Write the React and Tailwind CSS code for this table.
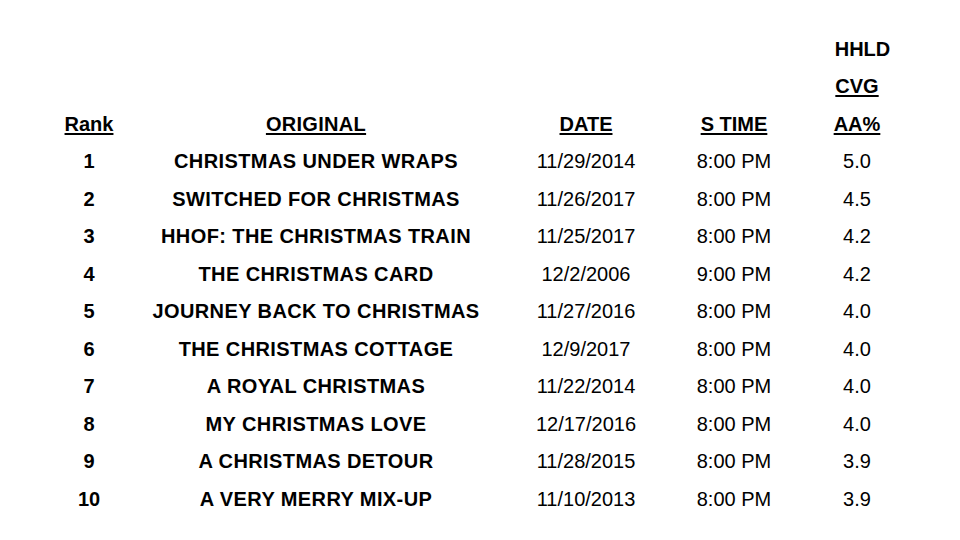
const rows = [
  ["1", "CHRISTMAS UNDER WRAPS", "11/29/2014", "8:00 PM", "5.0"],
  ["2", "SWITCHED FOR CHRISTMAS", "11/26/2017", "8:00 PM", "4.5"],
  ["3", "HHOF: THE CHRISTMAS TRAIN", "11/25/2017", "8:00 PM", "4.2"],
  ["4", "THE CHRISTMAS CARD", "12/2/2006", "9:00 PM", "4.2"],
  ["5", "JOURNEY BACK TO CHRISTMAS", "11/27/2016", "8:00 PM", "4.0"],
  ["6", "THE CHRISTMAS COTTAGE", "12/9/2017", "8:00 PM", "4.0"],
  ["7", "A ROYAL CHRISTMAS", "11/22/2014", "8:00 PM", "4.0"],
  ["8", "MY CHRISTMAS LOVE", "12/17/2016", "8:00 PM", "4.0"],
  ["9", "A CHRISTMAS DETOUR", "11/28/2015", "8:00 PM", "3.9"],
  ["10", "A VERY MERRY MIX-UP", "11/10/2013", "8:00 PM", "3.9"],
];

const grid = "grid grid-cols-[98px_356px_184px_112px_134px] h-[37.5px] items-center text-center";

export default function App() {
  return (
    <div className="w-[960px] h-[540px] bg-white text-black font-['Liberation_Sans',Arial,sans-serif] text-[20px] leading-none pl-[40px] pt-[30px]">
      {/* stacked header lines over last column */}
      <div className={grid}>
        <div /><div /><div /><div />
        <div className="font-bold pl-[11px]">HHLD</div>
      </div>
      <div className={grid}>
        <div /><div /><div /><div />
        <div className="font-bold underline underline-offset-2">CVG</div>
      </div>
      <div className={`${grid} font-bold underline underline-offset-2`}>
        <div>Rank</div>
        <div className="tracking-[0.3px]">ORIGINAL</div>
        <div>DATE</div>
        <div>S TIME</div>
        <div>AA%</div>
      </div>

      {rows.map(([rank, title, date, time, aa]) => (
        <div key={rank} className={grid}>
          <div className="font-bold">{rank}</div>
          <div className="font-bold tracking-[0.4px]">{title}</div>
          <div>{date}</div>
          <div>{time}</div>
          <div>{aa}</div>
        </div>
      ))}
    </div>
  );
}
